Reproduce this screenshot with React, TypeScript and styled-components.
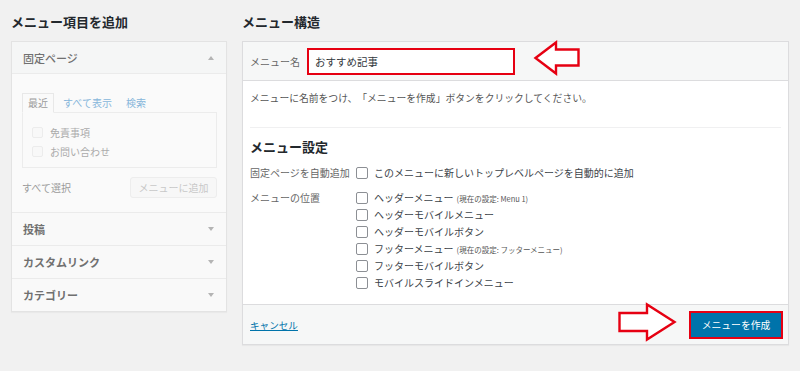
import styled, { createGlobalStyle, css } from 'styled-components';

const GlobalStyle = createGlobalStyle`
  body {
    margin: 0;
    background: #f1f1f1;
    font-family: "Noto Sans CJK JP", "Noto Sans", sans-serif;
    color: #444;
    text-spacing-trim: space-all;
  }
`;

const Page = styled.div`
  display: flex;
  align-items: flex-start;
  gap: 15px;
  padding: 12px 0 0 11px;
  height: 371px;
  box-sizing: border-box;
`;

const Column = styled.div<{ $width: number }>`
  width: ${(p) => p.$width}px;
  flex-shrink: 0;
`;

const Title = styled.h2`
  margin: 0 0 9px;
  font-size: 13px;
  line-height: 20px;
  font-weight: bold;
  color: #23282d;
`;

/* ---------- left: add menu items ---------- */

const SidePanel = styled.div`
  border: 1px solid #e3e3e3;
  background: #fafafa;
  box-shadow: 0 1px 1px rgba(0, 0, 0, 0.03);
`;

const SectionHead = styled.div<{ $open?: boolean }>`
  display: flex;
  align-items: center;
  justify-content: space-between;
  height: ${(p) => (p.$open ? 31 : 32)}px;
  padding: 0 12px 0 11px;
  font-size: 11px;
  font-weight: ${(p) => (p.$open ? 500 : 'bold')};
  color: #707070;
  background: ${(p) => (p.$open ? '#f5f6f6' : '#f9f9f9')};
  border-bottom: 1px solid #ebebeb;
  &:last-child {
    border-bottom: 0;
  }
`;

const Caret = styled.span<{ $up?: boolean }>`
  width: 0;
  height: 0;
  border-left: 3.5px solid transparent;
  border-right: 3.5px solid transparent;
  ${(p) =>
    p.$up
      ? css`border-bottom: 4px solid #b4b4b4;`
      : css`border-top: 4px solid #b4b4b4;`}
`;

const SectionBody = styled.div`
  padding: 19px 9px 14px 10px;
  border-bottom: 1px solid #ebebeb;
  background: #fafafa;
`;

const Tabs = styled.div`
  display: flex;
  align-items: flex-end;
  gap: 4px;
  height: 19px;
`;

const Tab = styled.span<{ $active?: boolean }>`
  font-size: 10px;
  line-height: 18px;
  padding: 0 5px;
  ${(p) =>
    p.$active
      ? css`
          border: 1px solid #e8e8e8;
          border-bottom-color: #fafafa;
          margin-bottom: -1px;
          color: #9a9a9a;
          background: #fafafa;
          position: relative;
        `
      : css`
          color: #86b6da;
        `}
`;

const TabBox = styled.div`
  border: 1px solid #ececec;
  padding: 10px 9px 6px;
`;

const FadedItem = styled.div`
  display: flex;
  align-items: center;
  gap: 7px;
  height: 19px;
  font-size: 10px;
  color: #ababab;
`;

const Box = styled.span<{ $faded?: boolean }>`
  display: inline-block;
  flex-shrink: 0;
  box-sizing: border-box;
  width: ${(p) => (p.$faded ? 11 : 12)}px;
  height: ${(p) => (p.$faded ? 11 : 12)}px;
  border: 1px solid ${(p) => (p.$faded ? '#ececec' : '#8c8f94')};
  border-radius: 2px;
  background: ${(p) => (p.$faded ? '#f8f8f8' : '#fff')};
`;

const Actions = styled.div`
  display: flex;
  align-items: center;
  justify-content: space-between;
  margin-top: 9px;
  font-size: 10px;
  color: #9a9a9a;
`;

const GhostButton = styled.button`
  width: 87px;
  height: 21px;
  padding: 0;
  border: 1px solid #ededed;
  border-radius: 3px;
  background: #f7f7f7;
  color: #c8c8c8;
  font-family: inherit;
  font-size: 10px;
`;

/* ---------- right: menu structure ---------- */

const MainPanel = styled.div`
  border: 1px solid #dcdcde;
  background: #fff;
  box-shadow: 0 1px 1px rgba(0, 0, 0, 0.04);
`;

const PanelHeader = styled.div`
  position: relative;
  display: flex;
  align-items: center;
  gap: 7px;
  height: 38px;
  padding: 0 7px;
  background: #f6f7f7;
  border-bottom: 1px solid #dcdcde;
`;

const Label = styled.span`
  font-size: 10px;
  line-height: 17px;
  color: #666;
`;

const NameInput = styled.input`
  box-sizing: border-box;
  width: 208px;
  height: 27px;
  padding: 0 6px;
  border: 2px solid #e60012;
  outline: none;
  background: #fff;
  font-family: inherit;
  font-size: 10.5px;
  color: #32373c;
`;

const Arrow = styled.svg<{ $top: number; $left?: number; $right?: number }>`
  position: absolute;
  top: ${(p) => p.$top}px;
  ${(p) => (p.$left !== undefined ? `left: ${p.$left}px;` : '')}
  ${(p) => (p.$right !== undefined ? `right: ${p.$right}px;` : '')}
  overflow: visible;
`;

const PanelBody = styled.div`
  padding: 10px 7px 13px;
`;

const Desc = styled.p`
  margin: 0;
  font-size: 9.8px;
  line-height: 14px;
  color: #555;
`;

const Divider = styled.div`
  margin-top: 22px;
  border-top: 1px solid #f0f0f1;
`;

const SubTitle = styled.h3`
  margin: 10px 0 0;
  font-size: 13px;
  line-height: 18px;
  font-weight: bold;
  color: #23282d;
`;

const SettingRow = styled.div`
  display: grid;
  grid-template-columns: 106px 1fr;
  margin-top: 8px;
`;

const Option = styled.label`
  display: flex;
  align-items: center;
  gap: 6px;
  height: 17px;
  font-size: 10px;
  color: #3c434a;
`;

const Note = styled.span`
  font-size: 7.5px;
  color: #555;
  margin-left: 3px;
`;

const PanelFooter = styled.div`
  position: relative;
  display: flex;
  align-items: center;
  justify-content: space-between;
  height: 39px;
  padding: 0 7px;
  background: #f6f7f7;
  border-top: 1px solid #dcdcde;
`;

const CancelLink = styled.a`
  font-size: 9.6px;
  color: #0073aa;
  text-decoration: underline;
`;

const PrimaryButton = styled.button`
  width: 90px;
  height: 24px;
  padding: 0;
  border: none;
  background: #0073aa;
  color: #fff;
  font-family: inherit;
  font-size: 9.8px;
  box-shadow: 0 0 0 2px #e60012;
`;

const locations: { name: string; note?: string }[] = [
  { name: 'ヘッダーメニュー', note: '(現在の設定: Menu 1)' },
  { name: 'ヘッダーモバイルメニュー' },
  { name: 'ヘッダーモバイルボタン' },
  { name: 'フッターメニュー', note: '(現在の設定: フッターメニュー)' },
  { name: 'フッターモバイルボタン' },
  { name: 'モバイルスライドインメニュー' },
];

export default function App() {
  return (
    <>
      <GlobalStyle />
      <Page>
        <Column $width={216}>
          <Title>メニュー項目を追加</Title>
          <SidePanel>
            <SectionHead $open>
              固定ページ
              <Caret $up />
            </SectionHead>
            <SectionBody>
              <Tabs>
                <Tab $active>最近</Tab>
                <Tab>すべて表示</Tab>
                <Tab>検索</Tab>
              </Tabs>
              <TabBox>
                <FadedItem>
                  <Box $faded />
                  免責事項
                </FadedItem>
                <FadedItem>
                  <Box $faded />
                  お問い合わせ
                </FadedItem>
              </TabBox>
              <Actions>
                <span>すべて選択</span>
                <GhostButton>メニューに追加</GhostButton>
              </Actions>
            </SectionBody>
            <SectionHead>
              投稿
              <Caret />
            </SectionHead>
            <SectionHead>
              カスタムリンク
              <Caret />
            </SectionHead>
            <SectionHead>
              カテゴリー
              <Caret />
            </SectionHead>
          </SidePanel>
        </Column>

        <Column $width={547}>
          <Title>メニュー構造</Title>
          <MainPanel>
            <PanelHeader>
              <Label>メニュー名</Label>
              <NameInput defaultValue="おすすめ記事" readOnly />
              <Arrow $top={-1} $left={291} width="46" height="34" viewBox="0 0 46 34">
                <polygon
                  points="1.5,17 22,1.5 22,8.5 44.5,8.5 44.5,24.5 22,24.5 22,32.5"
                  fill="#fff"
                  stroke="#e60012"
                  strokeWidth="2.4"
                />
              </Arrow>
            </PanelHeader>
            <PanelBody>
              <Desc>メニューに名前をつけ、「メニューを作成」ボタンをクリックしてください。</Desc>
              <Divider />
              <SubTitle>メニュー設定</SubTitle>
              <SettingRow>
                <Label>固定ページを自動追加</Label>
                <Option>
                  <Box />
                  このメニューに新しいトップレベルページを自動的に追加
                </Option>
              </SettingRow>
              <SettingRow>
                <Label>メニューの位置</Label>
                <div>
                  {locations.map((l) => (
                    <Option key={l.name}>
                      <Box />
                      <span>
                        {l.name}
                        {l.note && <Note>{l.note}</Note>}
                      </span>
                    </Option>
                  ))}
                </div>
              </SettingRow>
            </PanelBody>
            <PanelFooter>
              <CancelLink>キャンセル</CancelLink>
              <Arrow $top={-2} $right={112} width="58" height="38" viewBox="0 0 58 38">
                <polygon
                  points="1.5,10 29,10 29,1.5 56.5,19 29,36.5 29,28 1.5,28"
                  fill="#fff"
                  stroke="#e60012"
                  strokeWidth="2.4"
                />
              </Arrow>
              <PrimaryButton>メニューを作成</PrimaryButton>
            </PanelFooter>
          </MainPanel>
        </Column>
      </Page>
    </>
  );
}
